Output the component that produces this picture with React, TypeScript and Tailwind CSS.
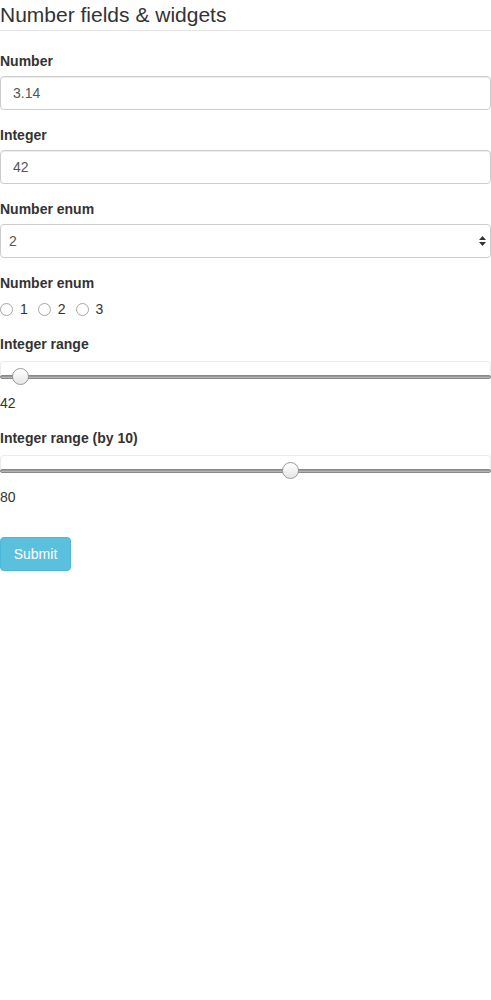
import React from 'react';

const font = 'font-["Liberation_Sans",Arial,sans-serif]';

function Label({ children }: { children: React.ReactNode }) {
  return (
    <label className="block text-[14px] leading-[20px] font-bold text-[#333] mb-[5px]">
      {children}
    </label>
  );
}

function TextInput({ value }: { value: string }) {
  return (
    <div className="h-[34px] w-full border border-[#ccc] rounded-[4px] bg-white px-[12px] flex items-center text-[14px] text-[#555] shadow-[inset_0_1px_1px_rgba(0,0,0,0.075)]">
      {value}
    </div>
  );
}

function Range({ left }: { left: number }) {
  return (
    <div className="relative h-[34px] w-full">
      <div className="absolute top-[2px] left-0 right-0 h-[16px] border-t border-x border-[#ececec] rounded-t-[4px]" />
      <div className="absolute top-[16px] left-0 right-0 h-[4px] rounded-[2px] bg-gradient-to-b from-[#8a8a8a] to-[#c4c4c4] border border-[#888]" />
      <div
        className="absolute top-[9px] w-[17px] h-[17px] rounded-full border border-[#999] bg-gradient-to-b from-white to-[#e6e6e6]"
        style={{ left: left - 8 }}
      />
    </div>
  );
}

function Radio({ label }: { label: string }) {
  return (
    <span className="inline-flex items-center gap-[7px] mr-[10px]">
      <span className="w-[13px] h-[13px] rounded-full border border-[#a5a5a5] bg-white inline-block" />
      <span>{label}</span>
    </span>
  );
}

export default function App() {
  return (
    <div className={`${font} text-[#333] text-[14px] leading-[20px] bg-white min-h-[1000px]`}>
      <div className="text-[21px] leading-[30px] border-b border-[#e5e5e5] mb-[20px]">
        Number fields &amp; widgets
      </div>

      <div className="mb-[15px]">
        <Label>Number</Label>
        <TextInput value="3.14" />
      </div>

      <div className="mb-[15px]">
        <Label>Integer</Label>
        <TextInput value="42" />
      </div>

      <div className="mb-[15px]">
        <Label>Number enum</Label>
        <div className="h-[34px] w-full border border-[#ccc] rounded-[4px] bg-white pl-[8px] pr-[4px] flex items-center justify-between text-[14px] text-[#555]">
          <span>2</span>
          <span className="flex flex-col items-center gap-[2px] text-[#222]">
            <svg width="7" height="4" viewBox="0 0 7 4"><path d="M3.5 0L7 4H0z" fill="#333" /></svg>
            <svg width="7" height="4" viewBox="0 0 7 4"><path d="M0 0H7L3.5 4z" fill="#333" /></svg>
          </span>
        </div>
      </div>

      <div className="mb-[15px]">
        <Label>Number enum</Label>
        <div className="flex items-center h-[20px] mt-[6px] mb-[4px]">
          <Radio label="1" />
          <Radio label="2" />
          <Radio label="3" />
        </div>
      </div>

      <div className="mb-[15px]">
        <Label>Integer range</Label>
        <Range left={20} />
        <div>42</div>
      </div>

      <div className="mb-[15px]">
        <Label>Integer range (by 10)</Label>
        <Range left={290} />
        <div>80</div>
      </div>

      <div className="pt-[15px]">
        <button className="h-[34px] w-[71px] rounded-[4px] bg-[#5bc0de] border border-[#46b8da] text-white text-[14px]">
          Submit
        </button>
      </div>
    </div>
  );
}
